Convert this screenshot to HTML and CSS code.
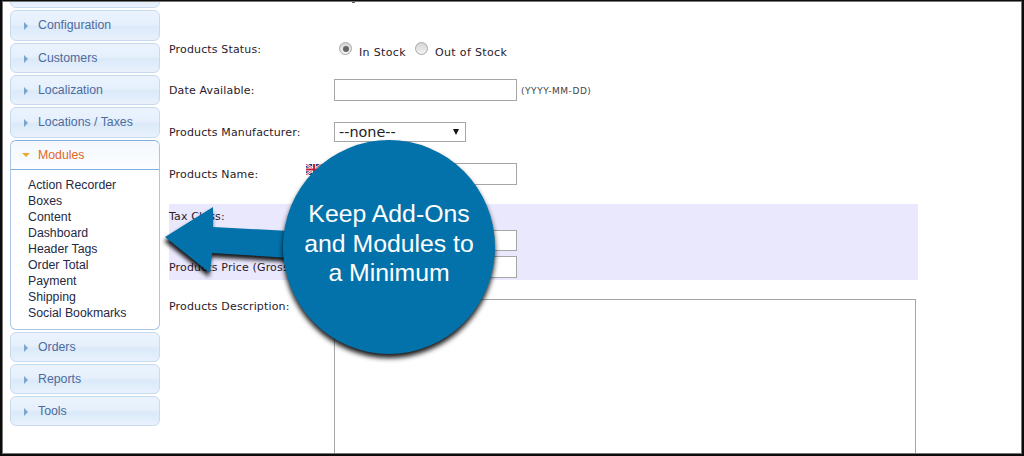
FILE: index.html
```html
<!DOCTYPE html>
<html lang="en">
<head>
<meta charset="utf-8">
<title>Keep Add-Ons and Modules to a Minimum</title>
<link rel="stylesheet" href="styles.css">
</head>
<body>
<div class="frame">
  <nav class="sidebar">
    <div class="acc-cut"></div>
    <div class="acc acc-tall"><span class="tri"></span>Configuration</div>
    <div class="acc"><span class="tri"></span>Customers</div>
    <div class="acc"><span class="tri"></span>Localization</div>
    <div class="acc acc-tall"><span class="tri"></span>Locations / Taxes</div>
    <div class="acc-open">
      <div class="acc-head"><span class="tri-down"></span>Modules</div>
      <ul class="acc-list">
        <li>Action Recorder</li>
        <li>Boxes</li>
        <li>Content</li>
        <li>Dashboard</li>
        <li>Header Tags</li>
        <li>Order Total</li>
        <li>Payment</li>
        <li>Shipping</li>
        <li>Social Bookmarks</li>
      </ul>
    </div>
    <div class="acc"><span class="tri"></span>Orders</div>
    <div class="acc"><span class="tri"></span>Reports</div>
    <div class="acc"><span class="tri"></span>Tools</div>
  </nav>
  <main class="form">
    <div class="row row-status">
      <div class="label">Products Status:</div>
      <div class="radios">
        <span class="radio radio-on"></span><span class="radio-text">In Stock</span>
        <span class="radio"></span><span class="radio-text">Out of Stock</span>
      </div>
    </div>
    <div class="row row-date">
      <div class="label">Date Available:</div>
      <span class="input"></span><span class="hint">(YYYY-MM-DD)</span>
    </div>
    <div class="row row-manu">
      <div class="label">Products Manufacturer:</div>
      <span class="select">--none--<span class="caret"></span></span>
    </div>
    <div class="row row-name">
      <div class="label label-short">Products Name:</div>
      <svg class="flag" viewBox="0 0 16 11"><rect width="16" height="11" fill="#2b3f86"/><path d="M0 0 16 11M16 0 0 11" stroke="#fff" stroke-width="2.4"/><path d="M0 0 16 11M16 0 0 11" stroke="#c8223a" stroke-width=".9"/><path d="M8 0V11M0 5.500H16" stroke="#fff" stroke-width="3.600"/><path d="M8 0V11M0 5.500H16" stroke="#c8223a" stroke-width="2"/></svg>
      <span class="input"></span>
    </div>
    <div class="tax">
      <div class="tax-row tax-class"><div class="label">Tax Class:</div></div>
      <div class="tax-row tax-net"><div class="label">&nbsp;</div><span class="input"></span></div>
      <div class="tax-row tax-gross"><div class="label">Products Price (Gross):</div><span class="input"></span></div>
    </div>
    <div class="row row-desc">
      <div class="label">Products Description:</div>
      <span class="textarea"></span>
    </div>
  </main>
  <span class="speck"></span>
  <svg class="arrow" viewBox="0 0 130 80"><path d="M5 37 53 7 53 27 130 31 130 58 52 53 50 73Z"/></svg>
  <div class="callout">Keep Add-Ons and Modules to a&nbsp;Minimum</div>
</div>
</body>
</html>
```
FILE: styles.css
```css
html, body { margin: 0; padding: 0; }
body { width: 1024px; height: 456px; overflow: hidden; background: #fff; }
.frame {
  position: relative;
  width: 1024px;
  height: 456px;
  display: flex;
  overflow: hidden;
  font-family: Verdana, "DejaVu Sans", sans-serif;
  background: #fff;
}
.frame::after {
  content: "";
  position: absolute;
  inset: 0;
  border: solid #0c0c0c;
  border-width: 1px 2px 2px 2px;
  box-shadow: inset 0 0 0 1px #777;
  pointer-events: none;
}
.sidebar {
  width: 150px;
  margin-left: 10px;
  margin-top: -23px;
  flex: none;
  display: flex;
  flex-direction: column;
  gap: 2px;
  font-family: "Liberation Sans", Arial, sans-serif;
}
.acc, .acc-cut {
  box-sizing: border-box;
  flex: none;
  height: 30px;
  line-height: 28px;
  border: 1px solid #c7dbef;
  border-radius: 6px;
  background: linear-gradient(#eaf3fe 0, #e6f0fc 46%, #dbe9f9 54%, #e9f2fd 100%);
  color: #4c6b9e;
  font-size: 12.3px;
  padding-left: 27px;
  position: relative;
}
.acc-cut { height: 31px; }
.acc-tall { height: 31px; line-height: 29px; }
.tri {
  position: absolute;
  left: 13px;
  top: 11px;
  border: solid transparent;
  border-width: 4px 0 4px 4px;
  border-left-color: #7ba4cf;
}
.acc-open {
  box-sizing: border-box;
  flex: none;
  height: 190px;
  border: 1px solid #aac6e4;
  border-top-color: #7fb0e0;
  border-radius: 6px;
  background: #fff;
}
.acc-head {
  height: 28px;
  line-height: 28px;
  border-bottom: 1px solid #7fb0e0;
  background: linear-gradient(#f4f8fc, #fbfdff);
  border-radius: 6px 6px 0 0;
  color: #e0682a;
  font-size: 12.3px;
  padding-left: 27px;
  position: relative;
}
.tri-down {
  position: absolute;
  left: 11px;
  top: 12px;
  border: solid transparent;
  border-width: 4px 4px 0 4px;
  border-top-color: #eaa92c;
}
.acc-list {
  list-style: none;
  margin: 7px 0 0;
  padding: 0 0 0 17px;
  color: #1f2a44;
  font-size: 12.3px;
  line-height: 16px;
}
.form {
  flex: 1;
  position: relative;
  color: #2a1a2a;
  font-size: 11px;
  letter-spacing: .15px;
}
.label { width: 165px; flex: none; }
.row { display: flex; position: absolute; left: 9px; align-items: flex-start; }
.row-status { top: 42px; }
.row-date { top: 79px; }
.row-manu { top: 122px; }
.row-name { top: 163px; }
.row-desc { top: 299px; }
.row-status .label { padding-top: 1px; }
.row-date .label { padding-top: 5px; }
.row-manu .label { padding-top: 4px; }
.row-name .label { padding-top: 5px; }
.row-desc .label { padding-top: 1px; }
.label-short { width: 137px; }
.radios { display: flex; align-items: flex-start; padding-left: 5px; letter-spacing: .35px; }
.radio {
  box-sizing: border-box;
  width: 13px;
  height: 13px;
  border-radius: 50%;
  border: 1px solid #a8a8a8;
  background: linear-gradient(#d4d4d4, #f4f4f4);
  flex: none;
  position: relative;
}
.radio-on::after {
  content: "";
  position: absolute;
  left: 2.500px;
  top: 2.500px;
  width: 6px;
  height: 6px;
  border-radius: 50%;
  background: #666;
}
.radio-text { margin: 4px 9px 0 7px; }
.radio-text:last-child { margin-left: 7px; }
.input {
  box-sizing: border-box;
  display: block;
  width: 183px;
  height: 22px;
  border: 1px solid #a6a6a6;
  background: #fff;
}
.hint { font-size: 9px; margin: 7px 0 0 4px; color: #444; letter-spacing: .55px; }
.select {
  box-sizing: border-box;
  display: block;
  position: relative;
  width: 132px;
  height: 20px;
  line-height: 19px;
  border: 1px solid #a6a6a6;
  padding-left: 4px;
  font-size: 14.4px;
  letter-spacing: 0;
  color: #222;
}
.caret {
  position: absolute;
  right: 6px;
  top: 6px;
  border: solid transparent;
  border-width: 6px 3px 0 3px;
  border-top-color: #111;
}
.flag { width: 16px; height: 11px; margin: 1px 12px 0 0; flex: none; }
.tax {
  position: absolute;
  left: 9px;
  top: 204px;
  width: 749px;
  height: 76px;
  background: #eae8fd;
}
.tax-row { position: absolute; left: 0; display: flex; }
.tax-class { top: 6px; }
.tax-net { top: 26px; }
.tax-gross { top: 52px; }
.tax-row .label { width: 165px; padding-top: 5px; }
.tax-class .label { padding-top: 0; }
.tax-net .input { height: 21px; }
.textarea {
  box-sizing: border-box;
  display: block;
  width: 582px;
  height: 170px;
  border: 1px solid #a6a6a6;
  background: #fff;
}
.speck {
  position: absolute;
  left: 352px;
  top: 2px;
  width: 3px;
  height: 1px;
  background: #5b5f75;
}
.arrow {
  position: absolute;
  left: 160px;
  top: 200px;
  width: 130px;
  height: 80px;
  fill: #0472aa;
  overflow: visible;
  filter: drop-shadow(-1px 4px 2px rgba(0,0,0,.9));
}
.callout {
  position: absolute;
  left: 283px;
  top: 140px;
  box-sizing: border-box;
  width: 212px;
  height: 214px;
  border-radius: 50%;
  background: #0472aa;
  box-shadow: 0 4px 5px rgba(0,0,0,.9);
  color: #fff;
  font-family: "Liberation Sans", Arial, sans-serif;
  font-size: 24.8px;
  line-height: 29.7px;
  text-align: center;
  padding: 59px 8px 0;
}
```
